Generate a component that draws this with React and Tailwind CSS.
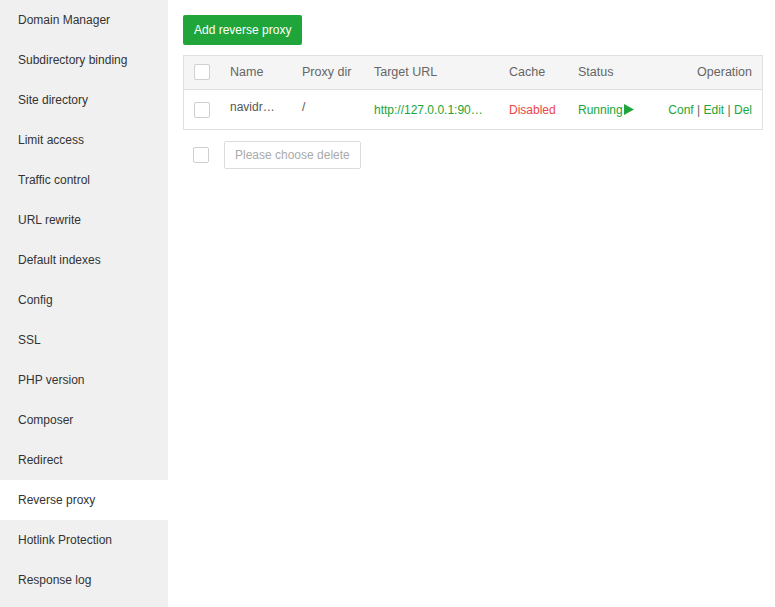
import React from "react";

// Sidebar menu
const menuData = [
  "Domain Manager",
  "Subdirectory binding",
  "Site directory",
  "Limit access",
  "Traffic control",
  "URL rewrite",
  "Default indexes",
  "Config",
  "SSL",
  "PHP version",
  "Composer",
  "Redirect",
  "Reverse proxy",
  "Hotlink Protection",
  "Response log",
];

const cols = "grid grid-cols-[36px_72px_72px_135px_69px_1fr_auto]";

function Checkbox() {
  return <span className="block h-4 w-4 rounded-[2px] border border-[#cfcfcf] bg-white" />;
}

export default function App() {
  return (
    <div
      className="flex h-[607px] w-[775px] bg-white text-[12px] text-[#333]"
      style={{ fontFamily: '"Liberation Sans", Arial, sans-serif' }}
    >
      {/* Sidebar */}
      <nav className="w-[168px] shrink-0 bg-[#f0f0f0]">
        <ul>
          {menuData.map((item, index) => (
            <li
              key={index}
              className={`flex h-10 items-center pb-[1px] pl-[18px] ${
                item === "Reverse proxy" ? "bg-white" : ""
              }`}
            >
              {item}
            </li>
          ))}
        </ul>
      </nav>

      {/* Main */}
      <main className="flex-1 pl-[15px] pr-3 pt-[15px]">
        <button className="flex h-[30px] items-center rounded-[2px] bg-[#20a53a] px-[11px] text-[12px] text-white">
          Add reverse proxy
        </button>

        <div className="mt-[10px] border border-[#e0e0e0]">
          {/* Header */}
          <div className={`${cols} h-[34px] items-center border-b border-[#e0e0e0] bg-[#f5f5f5] pb-[1px] text-[12.5px] text-[#666]`}>
            <div className="pl-[10px]">
              <Checkbox />
            </div>
            <div className="pl-[10px]">Name</div>
            <div className="pl-[10px]">Proxy dir</div>
            <div className="pl-[10px]">Target URL</div>
            <div className="pl-[10px]">Cache</div>
            <div className="pl-[10px]">Status</div>
            <div className="pr-[10px] text-right">Operation</div>
          </div>

          {/* Row */}
          <div className={`${cols} h-[39px] items-center`}>
            <div className="pl-[10px]">
              <Checkbox />
            </div>
            <div className="-mt-[5px] pl-[10px] text-[#555]">navidr…</div>
            <div className="-mt-[5px] pl-[10px] text-[#555]">/</div>
            <div className="truncate pl-[10px] pr-4 text-[#20a53a]">http://127.0.0.1:9000</div>
            <div className="pl-[10px] text-[#ef4444]">Disabled</div>
            <div className="flex items-center pl-[10px] text-[#20a53a]">
              Running
              <svg width="10" height="11" viewBox="0 0 10 11" className="ml-[1px]">
                <path d="M0 0 L10 5.5 L0 11 Z" fill="#20a53a" />
              </svg>
            </div>
            <div className="pr-[10px] text-right text-[#20a53a]">
              Conf <span className="text-[#666]">|</span> Edit <span className="text-[#666]">|</span> Del
            </div>
          </div>
        </div>

        {/* Batch delete */}
        <div className="mt-[11px] flex items-center">
          <div className="pl-[10px]">
            <Checkbox />
          </div>
          <button className="ml-[15px] flex h-[28px] items-center rounded-[2px] border border-[#dcdcdc] bg-white px-[10px] text-[#aaa]">
            Please choose delete
          </button>
        </div>
      </main>
    </div>
  );
}
